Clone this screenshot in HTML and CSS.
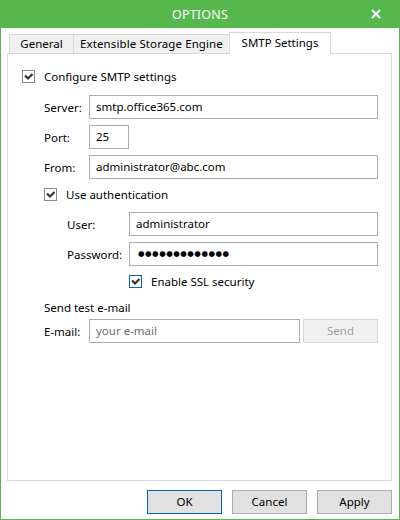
FILE: index.html
```html
<!DOCTYPE html>
<html>
<head>
<meta charset="utf-8">
<title>Options</title>
<link rel="stylesheet" href="styles.css">
</head>
<body>
<div class="window">
  <div class="titlebar">
    <span class="title">OPTIONS</span>
    <svg class="close" width="10" height="10" viewBox="0 0 10 10"><path d="M1 1 L9 9 M9 1 L1 9" stroke="#fff" stroke-width="2" fill="none"/></svg>
  </div>
  <div class="body">
    <div class="tabs">
      <div class="tab t-general">General</div>
      <div class="tab t-ese">Extensible Storage Engine</div>
      <div class="tab t-smtp active">SMTP Settings</div>
    </div>
    <div class="panel">
      <div class="row check-row">
        <span class="cb"><svg width="11" height="11" viewBox="0 0 11 11"><path d="M2 4.5 L5 7.5 L9.5 3" stroke="#333" stroke-width="2.2" fill="none"/></svg></span>
        <span>Configure SMTP settings</span>
      </div>
      <div class="group">
        <div class="row field first">
          <label class="lbl">Server:</label>
          <div class="input grow">smtp.office365.com</div>
        </div>
        <div class="row field">
          <label class="lbl">Port:</label>
          <div class="input port">25</div>
        </div>
        <div class="row field">
          <label class="lbl">From:</label>
          <div class="input grow">administrator@abc.com</div>
        </div>
        <div class="row check-row tight">
          <span class="cb"><svg width="11" height="11" viewBox="0 0 11 11"><path d="M2 4.5 L5 7.5 L9.5 3" stroke="#333" stroke-width="2.2" fill="none"/></svg></span>
          <span>Use authentication</span>
        </div>
        <div class="auth">
          <div class="row field">
            <label class="lbl wide">User:</label>
            <div class="input grow">administrator</div>
          </div>
          <div class="row field">
            <label class="lbl wide">Password:</label>
            <div class="input grow dots">●●●●●●●●●●●●●</div>
          </div>
          <div class="row check-row tight ssl">
            <span class="cb focus"><svg width="11" height="11" viewBox="0 0 11 11"><path d="M2 4.5 L5 7.5 L9.5 3" stroke="#333" stroke-width="2.2" fill="none"/></svg></span>
            <span>Enable SSL security</span>
          </div>
        </div>
        <div class="section">Send test e-mail</div>
        <div class="row field email">
          <label class="lbl">E-mail:</label>
          <div class="input mailbox placeholder">your e-mail</div>
          <div class="btn disabled send">Send</div>
        </div>
      </div>
    </div>
    <div class="buttons">
      <div class="btn default">OK</div>
      <div class="btn">Cancel</div>
      <div class="btn">Apply</div>
    </div>
  </div>
</div>
</body>
</html>
```
FILE: styles.css
```css
html, body {
  margin: 0;
  padding: 0;
  background: #fff;
}
body {
  font-family: "Noto Sans", "Open Sans", sans-serif;
  font-size: 11.5px;
  color: #000;
}
.window {
  width: 400px;
  height: 520px;
  box-sizing: border-box;
  display: flex;
  flex-direction: column;
  border: 1px solid #56b74d;
  border-top: none;
  background: #fff;
}
.titlebar {
  height: 28px;
  margin: 0 -1px;
  background: #56b74d;
  display: flex;
  align-items: center;
  justify-content: center;
  position: relative;
  color: #fff;
}
.title {
  font-size: 12.5px;
  letter-spacing: 0.2px;
}
.close {
  position: absolute;
  right: 19px;
  top: 9px;
}
.body {
  flex: 1;
  padding: 4px 6px 0 6px;
  display: flex;
  flex-direction: column;
}
.tabs {
  display: flex;
  align-items: flex-end;
  height: 21px;
  padding-left: 2px;
  position: relative;
  z-index: 1;
}
.tab {
  height: 19px;
  box-sizing: border-box;
  border: 1px solid #d9d9d9;
  border-bottom: none;
  border-right: none;
  background: #f0f0f0;
  line-height: 18px;
  white-space: nowrap;
  text-align: center;
}
.t-general {
  width: 64px;
}
.t-ese {
  width: 156px;
  letter-spacing: 0.1px;
}
.tab.active {
  width: 102px;
  height: 22px;
  margin-bottom: -1px;
  background: #fff;
  border-right: 1px solid #d9d9d9;
  line-height: 20px;
}
.panel {
  height: 428px;
  box-sizing: border-box;
  border: 1px solid #d9d9d9;
  margin-right: 1px;
  padding: 10px 13px 0 14px;
}
.group {
  padding-left: 22px;
}
.row {
  display: flex;
  align-items: center;
  height: 24px;
}
.check-row .cb {
  width: 13px;
  height: 13px;
  box-sizing: border-box;
  border: 1px solid #8a8a8a;
  margin-right: 9px;
  display: flex;
  align-items: center;
  justify-content: center;
  background: #fff;
}
.cb.focus {
  border-color: #0a64b4;
}
.field {
  margin-top: 6px;
}
.field.first {
  margin-top: 7px;
}
.lbl {
  width: 45px;
  flex: none;
}
.lbl.wide {
  width: 62px;
}
.input {
  height: 24px;
  box-sizing: border-box;
  border: 1px solid #acacac;
  padding: 0 6px;
  line-height: 22px;
  white-space: nowrap;
  overflow: hidden;
}
.grow {
  flex: 1;
}
.port {
  width: 40px;
}
.dots {
  font-size: 7.5px;
  letter-spacing: 0.5px;
  padding-left: 8px;
  font-family: "DejaVu Sans", sans-serif;
}
.auth {
  padding-left: 23px;
}
.tight {
  margin-top: 3px;
}
.ssl {
  padding-left: 62px;
}
.section {
  height: 20px;
  line-height: 20px;
  margin-top: 5px;
}
.email {
  margin-top: 1px;
}
.mailbox {
  width: 211px;
  margin-right: 3px;
}
.placeholder {
  color: #6d6d6d;
}
.btn {
  width: 75px;
  height: 24px;
  box-sizing: border-box;
  border: 1px solid #adadad;
  background: #e1e1e1;
  text-align: center;
  line-height: 22px;
}
.btn.default {
  border-color: #0063b1;
}
.btn.send {
  flex: 1;
}
.btn.disabled {
  background: #f0f0f0;
  border-color: #d9d9d9;
  color: #a0a0a0;
}
.buttons {
  display: flex;
  justify-content: flex-end;
  gap: 10px;
  margin-top: 9px;
  margin-right: 1px;
}
```
